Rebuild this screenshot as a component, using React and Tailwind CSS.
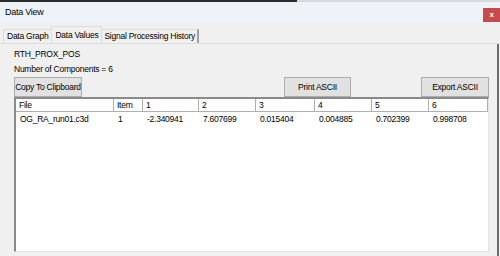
const cols = [
  { name: "File", w: "w-[98px]" },
  { name: "Item", w: "w-[29px]" },
  { name: "1", w: "w-[56px]" },
  { name: "2", w: "w-[57px]" },
  { name: "3", w: "w-[59px]" },
  { name: "4", w: "w-[57px]" },
  { name: "5", w: "w-[57px]" },
  { name: "6", w: "flex-1" },
];

const row = [
  "OG_RA_run01.c3d",
  "1",
  "-2.340941",
  "7.607699",
  "0.015404",
  "0.004885",
  "0.702399",
  "0.998708",
];

function WinButton({ children, className }) {
  return (
    <button
      className={`h-[20px] whitespace-nowrap border border-[#adadad] bg-[#e1e1e1] text-black ${className}`}
    >
      {children}
    </button>
  );
}

export default function App() {
  return (
    <div
      className="w-[500px] h-[256px] bg-[#f0f0f0] flex flex-col overflow-hidden text-[8.5px] tracking-[-0.25px] text-black"
      style={{ fontFamily: '"Liberation Sans", Arial, sans-serif' }}
    >
      {/* title strip */}
      <div className="h-[2px] flex">
        <div className="w-[297px] bg-[#2b2b2b]" />
        <div className="flex-1 bg-[#d9d9d9]" />
      </div>
      <div className="h-[21px] bg-[#eef3fa] flex items-center justify-between pl-[5px]">
        <span className="text-[9px]">Data View</span>
        <div className="w-[17px] h-[14px] mt-[4px] bg-[#c94a4c] text-white text-[8px] font-bold flex items-center justify-center">
          x
        </div>
      </div>

      {/* tabs */}
      <div className="flex items-end h-[20px] pl-[3px] pr-[5px]">
        <div className="h-[14px] px-[3px] border-t border-l border-[#dcdcdc] flex items-center">
          Data Graph
        </div>
        <div className="h-[17px] px-[3px] bg-[#f0f0f0] border-t border-l border-r border-[#dcdcdc] flex items-center">
          Data Values
        </div>
        <div className="h-[14px] px-[2px] border-t border-r-2 border-[#dcdcdc] border-r-[#a0a0a0] flex items-center">
          Signal Processing History
        </div>
      </div>

      {/* panel */}
      <div className="flex-1 flex border-t border-[#dcdcdc] mr-[1px]">
        <div className="flex-1 flex flex-col pl-[14px] pr-[8px] pt-[3px] border-r-2 border-[#6d6d6d]">
          <div className="h-[15px] flex items-center">RTH_PROX_POS</div>
          <div className="h-[14px] flex items-center">Number of Components = 6</div>
          <div className="flex items-center mt-[1px]">
            <WinButton className="w-[68px]">Copy To Clipboard</WinButton>
            <div className="flex-1" />
            <WinButton className="w-[67px] mr-[70px]">Print ASCII</WinButton>
            <WinButton className="w-[68px]">Export ASCII</WinButton>
          </div>

          <div className="flex-1 mb-[4px] bg-white border-l-2 border-t-2 border-l-[#8a8a8a] border-t-[#8a8a8a] border-r border-b border-r-[#e3e3e3] border-b-[#e3e3e3] flex flex-col">
            <div className="flex h-[13px]">
              {cols.map((c) => (
                <div
                  key={c.name}
                  className={`${c.w} border-r border-b border-[#b0b0b0] bg-white pl-[3px] flex items-center`}
                >
                  {c.name}
                </div>
              ))}
            </div>
            <div className="flex h-[14px]">
              {cols.map((c, i) => (
                <div
                  key={c.name}
                  className={`${c.w} pl-[4px] flex items-center`}
                >
                  {row[i]}
                </div>
              ))}
            </div>
          </div>
        </div>
      </div>
    </div>
  );
}
